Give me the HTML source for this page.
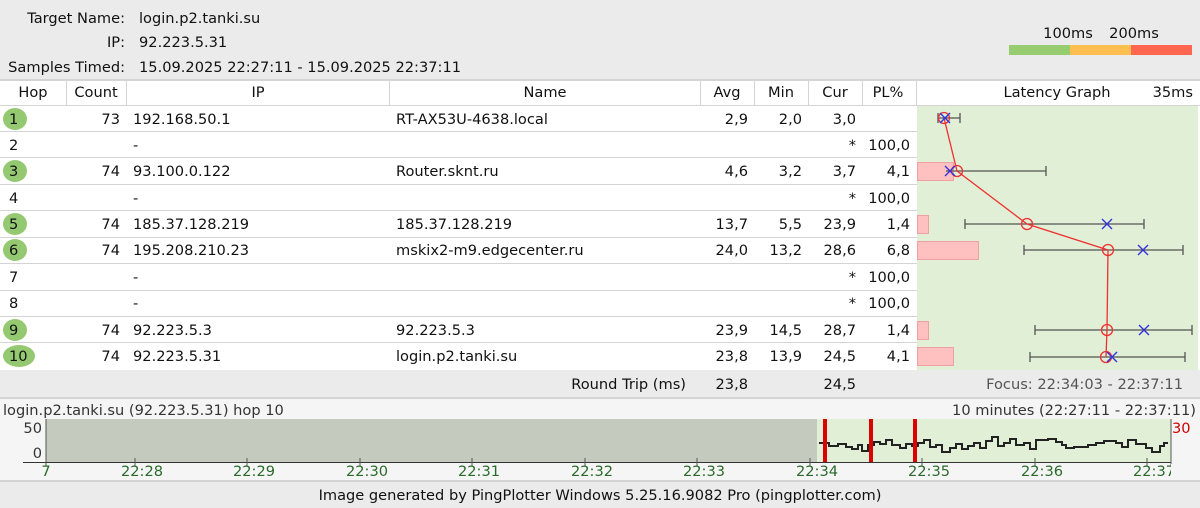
<!DOCTYPE html>
<html><head><meta charset="utf-8"><style>
html,body{margin:0;padding:0;width:1200px;height:508px;overflow:hidden;background:#ebebeb}
svg{display:block;font-family:"DejaVu Sans","Liberation Sans",sans-serif;font-size:14.6px}
</style></head><body>
<svg width="1200" height="508" viewBox="0 0 1200 508">
<rect x="0" y="0" width="1200" height="508" fill="#ebebeb"/>
<g fill="#111">
<text x="125" y="23" text-anchor="end">Target Name:</text>
<text x="139" y="23">login.p2.tanki.su</text>
<text x="125" y="47" text-anchor="end">IP:</text>
<text x="139" y="47">92.223.5.31</text>
<text x="125" y="72" text-anchor="end">Samples Timed:</text>
<text x="139" y="72">15.09.2025 22:27:11 - 15.09.2025 22:37:11</text>
<text x="1068" y="38" text-anchor="middle">100ms</text>
<text x="1134" y="38" text-anchor="middle">200ms</text>
</g>
<rect x="1009" y="45" width="61" height="10" fill="#97cc70"/>
<rect x="1070" y="45" width="61" height="10" fill="#ffbe50"/>
<rect x="1131" y="45" width="61" height="10" fill="#ff6650"/>
<rect x="0" y="80" width="1200" height="290" fill="#fff"/>
<rect x="917" y="106" width="281" height="264" fill="#e0efd6"/>
<rect x="0" y="79" width="1200" height="2" fill="#d4d4d4"/>
<g stroke="#d4d4d4" stroke-width="1">
<line x1="0" y1="105.5" x2="1200" y2="105.5"/>
<line x1="0" y1="131.5" x2="917" y2="131.5"/>
<line x1="0" y1="157.5" x2="917" y2="157.5"/>
<line x1="0" y1="184.5" x2="917" y2="184.5"/>
<line x1="0" y1="210.5" x2="917" y2="210.5"/>
<line x1="0" y1="237.5" x2="917" y2="237.5"/>
<line x1="0" y1="263.5" x2="917" y2="263.5"/>
<line x1="0" y1="290.5" x2="917" y2="290.5"/>
<line x1="0" y1="316.5" x2="917" y2="316.5"/>
<line x1="0" y1="342.5" x2="917" y2="342.5"/>
<line x1="66.5" y1="81" x2="66.5" y2="105"/>
<line x1="126.5" y1="81" x2="126.5" y2="105"/>
<line x1="389.5" y1="81" x2="389.5" y2="105"/>
<line x1="700.5" y1="81" x2="700.5" y2="105"/>
<line x1="754.5" y1="81" x2="754.5" y2="105"/>
<line x1="808.5" y1="81" x2="808.5" y2="105"/>
<line x1="862.5" y1="81" x2="862.5" y2="105"/>
<line x1="916.5" y1="81" x2="916.5" y2="105"/>
</g>
<g fill="#111">
<text x="33" y="97" text-anchor="middle">Hop</text>
<text x="96" y="97" text-anchor="middle">Count</text>
<text x="258" y="97" text-anchor="middle">IP</text>
<text x="545" y="97" text-anchor="middle">Name</text>
<text x="727" y="97" text-anchor="middle">Avg</text>
<text x="781" y="97" text-anchor="middle">Min</text>
<text x="835" y="97" text-anchor="middle">Cur</text>
<text x="888" y="97" text-anchor="middle">PL%</text>
<text x="1057" y="97" text-anchor="middle">Latency Graph</text>
<text x="1193" y="97" text-anchor="end">35ms</text>
</g>
<g fill="#94c971">
<ellipse cx="15" cy="119" rx="12" ry="11"/>
<ellipse cx="15" cy="171" rx="12" ry="11"/>
<ellipse cx="15" cy="224" rx="12" ry="11"/>
<ellipse cx="15" cy="250" rx="12" ry="11"/>
<ellipse cx="15" cy="330" rx="12" ry="11"/>
<ellipse cx="19" cy="356" rx="16" ry="11"/>
</g>
<g fill="#111">
<text x="9" y="124">1</text><text x="120" y="124" text-anchor="end">73</text><text x="133" y="124">192.168.50.1</text><text x="396" y="124">RT-AX53U-4638.local</text><text x="748" y="124" text-anchor="end">2,9</text><text x="802" y="124" text-anchor="end">2,0</text><text x="856" y="124" text-anchor="end">3,0</text>
<text x="9" y="150">2</text><text x="133" y="150">-</text><text x="856" y="150" text-anchor="end">*</text><text x="910" y="150" text-anchor="end">100,0</text>
<text x="9" y="176">3</text><text x="120" y="176" text-anchor="end">74</text><text x="133" y="176">93.100.0.122</text><text x="396" y="176">Router.sknt.ru</text><text x="748" y="176" text-anchor="end">4,6</text><text x="802" y="176" text-anchor="end">3,2</text><text x="856" y="176" text-anchor="end">3,7</text><text x="910" y="176" text-anchor="end">4,1</text>
<text x="9" y="203">4</text><text x="133" y="203">-</text><text x="856" y="203" text-anchor="end">*</text><text x="910" y="203" text-anchor="end">100,0</text>
<text x="9" y="229">5</text><text x="120" y="229" text-anchor="end">74</text><text x="133" y="229">185.37.128.219</text><text x="396" y="229">185.37.128.219</text><text x="748" y="229" text-anchor="end">13,7</text><text x="802" y="229" text-anchor="end">5,5</text><text x="856" y="229" text-anchor="end">23,9</text><text x="910" y="229" text-anchor="end">1,4</text>
<text x="9" y="255">6</text><text x="120" y="255" text-anchor="end">74</text><text x="133" y="255">195.208.210.23</text><text x="396" y="255">mskix2-m9.edgecenter.ru</text><text x="748" y="255" text-anchor="end">24,0</text><text x="802" y="255" text-anchor="end">13,2</text><text x="856" y="255" text-anchor="end">28,6</text><text x="910" y="255" text-anchor="end">6,8</text>
<text x="9" y="282">7</text><text x="133" y="282">-</text><text x="856" y="282" text-anchor="end">*</text><text x="910" y="282" text-anchor="end">100,0</text>
<text x="9" y="308">8</text><text x="133" y="308">-</text><text x="856" y="308" text-anchor="end">*</text><text x="910" y="308" text-anchor="end">100,0</text>
<text x="9" y="335">9</text><text x="120" y="335" text-anchor="end">74</text><text x="133" y="335">92.223.5.3</text><text x="396" y="335">92.223.5.3</text><text x="748" y="335" text-anchor="end">23,9</text><text x="802" y="335" text-anchor="end">14,5</text><text x="856" y="335" text-anchor="end">28,7</text><text x="910" y="335" text-anchor="end">1,4</text>
<text x="9" y="361">10</text><text x="120" y="361" text-anchor="end">74</text><text x="133" y="361">92.223.5.31</text><text x="396" y="361">login.p2.tanki.su</text><text x="748" y="361" text-anchor="end">23,8</text><text x="802" y="361" text-anchor="end">13,9</text><text x="856" y="361" text-anchor="end">24,5</text><text x="910" y="361" text-anchor="end">4,1</text>
</g>
<g fill="#ffc0c0" stroke="#f0a0a0" stroke-width="1">
<rect x="917.5" y="162.5" width="36" height="18"/>
<rect x="917.5" y="215.5" width="11" height="18"/>
<rect x="917.5" y="241.5" width="61" height="18"/>
<rect x="917.5" y="321.5" width="11" height="18"/>
<rect x="917.5" y="347.5" width="36" height="18"/>
</g>
<g stroke="#555" stroke-width="1.3">
<line x1="938" y1="118" x2="960" y2="118"/><line x1="938" y1="113" x2="938" y2="123"/><line x1="960" y1="113" x2="960" y2="123"/>
<line x1="946" y1="171" x2="1046" y2="171"/><line x1="1046" y1="166" x2="1046" y2="176"/>
<line x1="965" y1="224" x2="1144" y2="224"/><line x1="965" y1="219" x2="965" y2="229"/><line x1="1144" y1="219" x2="1144" y2="229"/>
<line x1="1024" y1="250" x2="1183" y2="250"/><line x1="1024" y1="245" x2="1024" y2="255"/><line x1="1183" y1="245" x2="1183" y2="255"/>
<line x1="1035" y1="330" x2="1192" y2="330"/><line x1="1035" y1="325" x2="1035" y2="335"/><line x1="1192" y1="325" x2="1192" y2="335"/>
<line x1="1030" y1="357" x2="1185" y2="357"/><line x1="1030" y1="352" x2="1030" y2="362"/><line x1="1185" y1="352" x2="1185" y2="362"/>
</g>
<polyline points="944,118 957,171 1027,224 1108,250 1107,330 1106,357" fill="none" stroke="#f03030" stroke-width="1.3"/>
<g fill="none" stroke="#f03030" stroke-width="1.3">
<circle cx="944" cy="118" r="5.5"/><circle cx="957" cy="171" r="5.5"/><circle cx="1027" cy="224" r="5.5"/><circle cx="1108" cy="250" r="5.5"/><circle cx="1107" cy="330" r="5.5"/><circle cx="1106" cy="357" r="5.5"/>
</g>
<g stroke="#3333dd" stroke-width="1.4">
<path d="M940,113l10,10M950,113l-10,10"/>
<path d="M945,166l10,10M955,166l-10,10"/>
<path d="M1102,219l10,10M1112,219l-10,10"/>
<path d="M1138,245l10,10M1148,245l-10,10"/>
<path d="M1139,325l10,10M1149,325l-10,10"/>
<path d="M1107,352l10,10M1117,352l-10,10"/>
</g>
<rect x="0" y="370" width="1200" height="27" fill="#ebebeb"/>
<g fill="#111">
<text x="686" y="389" text-anchor="end">Round Trip (ms)</text>
<text x="748" y="389" text-anchor="end">23,8</text>
<text x="856" y="389" text-anchor="end">24,5</text>
</g>
<text x="1183" y="389" text-anchor="end" fill="#555">Focus: 22:34:03 - 22:37:11</text>
<rect x="0" y="397" width="1200" height="2" fill="#d4d4d4"/>
<rect x="0" y="399" width="1200" height="81" fill="#f5f5f5"/>
<g fill="#333">
<text x="3" y="415">login.p2.tanki.su (92.223.5.31) hop 10</text>
<text x="1196" y="415" text-anchor="end">10 minutes (22:27:11 - 22:37:11)</text>
<text x="42" y="433" text-anchor="end">50</text>
<text x="42" y="458" text-anchor="end">0</text>
</g>
<text x="1172" y="433" fill="#cc0000">30</text>
<rect x="46" y="419" width="771" height="43" fill="#c5cabf"/>
<rect x="817" y="419" width="354" height="43" fill="#e0efd6"/>
<line x1="46" y1="419" x2="46" y2="466" stroke="#555"/>
<line x1="23" y1="462.5" x2="1171" y2="462.5" stroke="#333"/>
<line x1="1171" y1="419" x2="1171" y2="466" stroke="#555"/>
<polyline fill="none" stroke="#222" stroke-width="2" points="819,443 829,443 829,446 838,446 838,444 846,444 846,447 852,447 852,449 858,449 858,445 862,445 862,451 868,451 868,445 874,445 874,442 880,442 880,444 886,444 886,440 892,440 892,445 900,445 900,448 906,448 906,444 912,444 912,446 918,446 918,443 924,443 924,440 930,440 930,447 936,447 936,445 942,445 942,452 950,452 950,448 956,448 956,444 962,444 962,449 968,449 968,446 974,446 974,443 980,443 980,448 986,448 986,441 992,441 992,437 998,437 998,446 1004,446 1004,443 1010,443 1010,439 1016,439 1016,445 1024,445 1024,443 1030,443 1030,449 1036,449 1036,440 1048,440 1048,439 1056,439 1056,442 1062,442 1062,445 1066,445 1066,448 1074,448 1074,447 1088,447 1088,445 1096,445 1096,443 1104,443 1104,441 1116,441 1116,443 1122,443 1122,447 1128,447 1128,440 1136,440 1136,444 1146,444 1146,448 1152,448 1152,452 1160,452 1160,446 1164,446 1164,443 1168,443"/>
<g fill="#d00">
<rect x="823" y="419" width="4" height="43"/>
<rect x="869" y="419" width="4" height="43"/>
<rect x="913" y="419" width="4" height="43"/>
</g>
<g stroke="#555">
<line x1="135" y1="458" x2="135" y2="466"/><line x1="247" y1="458" x2="247" y2="466"/><line x1="360" y1="458" x2="360" y2="466"/><line x1="472" y1="458" x2="472" y2="466"/><line x1="585" y1="458" x2="585" y2="466"/><line x1="697" y1="458" x2="697" y2="466"/><line x1="810" y1="458" x2="810" y2="466"/><line x1="922" y1="458" x2="922" y2="466"/><line x1="1035" y1="458" x2="1035" y2="466"/><line x1="1147" y1="458" x2="1147" y2="466"/>
</g>
<g fill="#2a6a2a" text-anchor="middle">
<text x="46" y="476">7</text>
<text x="142" y="476">22:28</text><text x="254" y="476">22:29</text><text x="367" y="476">22:30</text><text x="479" y="476">22:31</text><text x="592" y="476">22:32</text><text x="704" y="476">22:33</text><text x="817" y="476">22:34</text><text x="929" y="476">22:35</text><text x="1042" y="476">22:36</text><text x="1154" y="476">22:37</text>
</g>
<rect x="1171" y="464" width="29" height="16" fill="#f5f5f5"/>
<rect x="0" y="480" width="1200" height="2" fill="#d4d4d4"/>
<text x="600" y="500" text-anchor="middle" fill="#111">Image generated by PingPlotter Windows 5.25.16.9082 Pro (pingplotter.com)</text>
</svg>
</body></html>
